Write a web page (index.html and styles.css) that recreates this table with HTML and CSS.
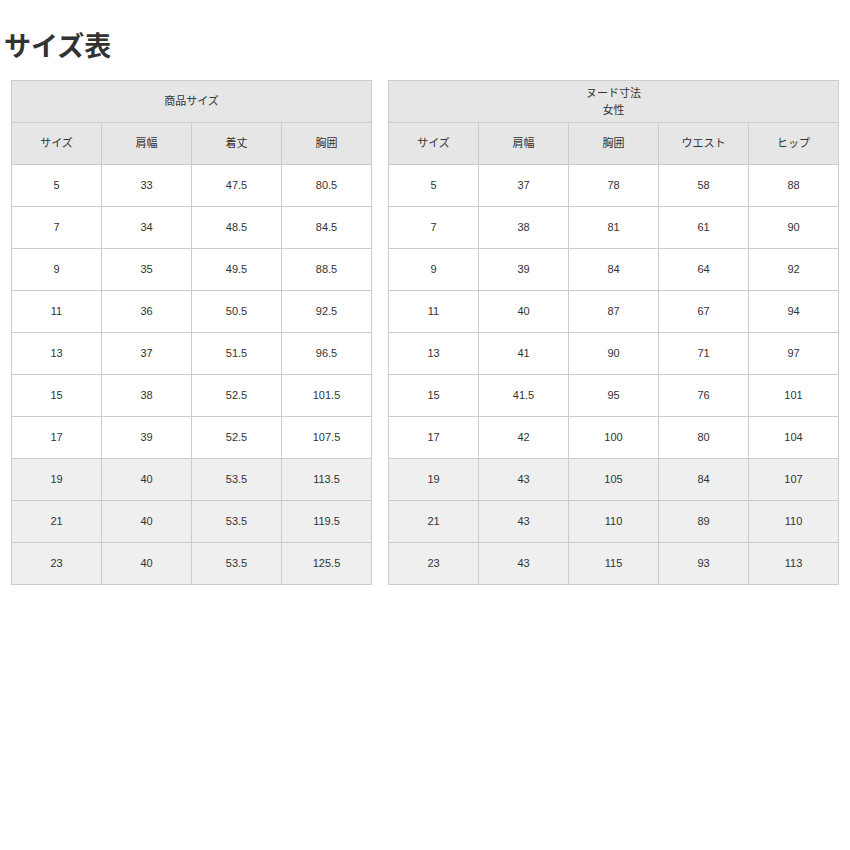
FILE: index.html
```html
<!DOCTYPE html>
<html lang="ja">
<head>
<meta charset="utf-8">
<link rel="stylesheet" href="styles.css">
</head>
<body>
<h1 class="title">サイズ表</h1>
<div class="tables">
  <table class="size-table t1">
    <thead>
      <tr><th colspan="4" class="group">商品サイズ</th></tr>
      <tr><th>サイズ</th><th>肩幅</th><th>着丈</th><th>胸囲</th></tr>
    </thead>
    <tbody>
      <tr><td>5</td><td>33</td><td>47.5</td><td>80.5</td></tr>
      <tr><td>7</td><td>34</td><td>48.5</td><td>84.5</td></tr>
      <tr><td>9</td><td>35</td><td>49.5</td><td>88.5</td></tr>
      <tr><td>11</td><td>36</td><td>50.5</td><td>92.5</td></tr>
      <tr><td>13</td><td>37</td><td>51.5</td><td>96.5</td></tr>
      <tr><td>15</td><td>38</td><td>52.5</td><td>101.5</td></tr>
      <tr><td>17</td><td>39</td><td>52.5</td><td>107.5</td></tr>
      <tr class="big"><td>19</td><td>40</td><td>53.5</td><td>113.5</td></tr>
      <tr class="big"><td>21</td><td>40</td><td>53.5</td><td>119.5</td></tr>
      <tr class="big"><td>23</td><td>40</td><td>53.5</td><td>125.5</td></tr>
    </tbody>
  </table>
  <table class="size-table t2">
    <thead>
      <tr><th colspan="5" class="group">ヌード寸法<br>女性</th></tr>
      <tr><th>サイズ</th><th>肩幅</th><th>胸囲</th><th>ウエスト</th><th>ヒップ</th></tr>
    </thead>
    <tbody>
      <tr><td>5</td><td>37</td><td>78</td><td>58</td><td>88</td></tr>
      <tr><td>7</td><td>38</td><td>81</td><td>61</td><td>90</td></tr>
      <tr><td>9</td><td>39</td><td>84</td><td>64</td><td>92</td></tr>
      <tr><td>11</td><td>40</td><td>87</td><td>67</td><td>94</td></tr>
      <tr><td>13</td><td>41</td><td>90</td><td>71</td><td>97</td></tr>
      <tr><td>15</td><td>41.5</td><td>95</td><td>76</td><td>101</td></tr>
      <tr><td>17</td><td>42</td><td>100</td><td>80</td><td>104</td></tr>
      <tr class="big"><td>19</td><td>43</td><td>105</td><td>84</td><td>107</td></tr>
      <tr class="big"><td>21</td><td>43</td><td>110</td><td>89</td><td>110</td></tr>
      <tr class="big"><td>23</td><td>43</td><td>115</td><td>93</td><td>113</td></tr>
    </tbody>
  </table>
</div>
</body>
</html>
```
FILE: styles.css
```css
html, body {
  margin: 0;
  padding: 0;
  background: #fff;
}
body {
  font-family: "Liberation Sans", "Noto Sans CJK JP", sans-serif;
  color: #333;
}
.title {
  margin: 0 0 18px 0;
  padding: 28px 0 0 4px;
  font-size: 27px;
  line-height: 34px;
  font-weight: bold;
  color: #333;
  font-family: "Noto Sans CJK JP", sans-serif;
}
.tables {
  display: flex;
  align-items: flex-start;
  gap: 16px;
  padding-left: 11px;
}
.size-table {
  border-collapse: collapse;
  table-layout: fixed;
  font-size: 11px;
  font-family: "Liberation Sans", "Noto Sans CJK JP", sans-serif;
  color: #333;
}
.t1 { width: 361px; }
.t2 { width: 451px; }
.size-table th,
.size-table td {
  border: 1px solid #cccccc;
  height: 41px;
  padding: 0;
  text-align: center;
  vertical-align: middle;
  font-weight: normal;
  line-height: 17px;
}
.size-table th {
  background: #e6e6e6;
}
.size-table td {
  background: #fff;
}
.size-table tr.big td {
  background: #efefef;
}
```
